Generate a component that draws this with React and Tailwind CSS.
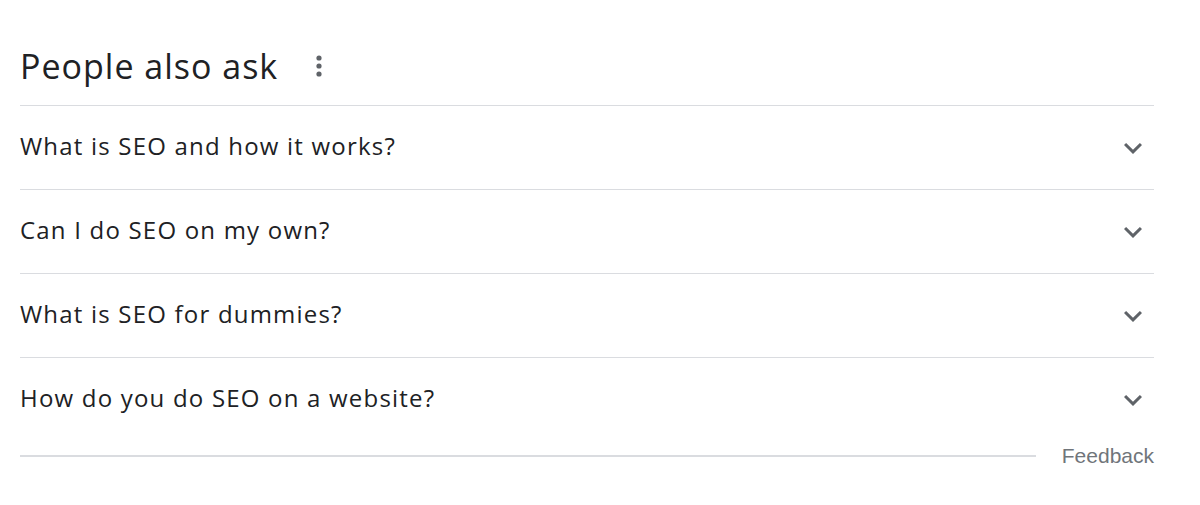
// People also ask block
const QUESTIONS = [
  'What is SEO and how it works?',
  'Can I do SEO on my own?',
  'What is SEO for dummies?',
  'How do you do SEO on a website?',
];

function MoreIcon() {
  return (
    <svg width="8" height="24" viewBox="0 0 8 24" className="text-[#5f6368]">
      <circle cx="4" cy="4" r="2.6" fill="currentColor" />
      <circle cx="4" cy="12" r="2.6" fill="currentColor" />
      <circle cx="4" cy="20" r="2.6" fill="currentColor" />
    </svg>
  );
}

function Chevron() {
  return (
    <svg width="36" height="36" viewBox="0 0 24 24" className="text-[#5f6368]">
      <path d="M16.59 8.59 12 13.17 7.41 8.59 6 10l6 6 6-6z" fill="currentColor" />
    </svg>
  );
}

export default function App() {
  return (
    <div className="w-[1200px] h-[505px] bg-white font-['Open_Sans',sans-serif] text-[#202124]">
      <div className="pl-5 pr-[46px] pt-[44px]">
        <div className="flex items-center h-[44px] mb-[17px]">
          <h2 className="text-[34px] leading-none tracking-[1px]">People also ask</h2>
          <div className="ml-[37px] flex items-center">
            <MoreIcon />
          </div>
        </div>

        <div className="border-t border-[#dadce0]">
          {QUESTIONS.map((q) => (
            <div
              key={q}
              className="flex items-center justify-between h-[84px] border-b border-[#dadce0] last:border-b-0"
            >
              <span className="text-[24px] leading-none tracking-[1.2px] mb-[4px]">{q}</span>
              <span className="mr-[3px] flex items-center">
                <Chevron />
              </span>
            </div>
          ))}
        </div>

        <div className="flex items-center mt-[3px]">
          <div className="flex-1 border-t-2 border-[#dadce0]" />
          <span className="ml-[26px] text-[21px] leading-none text-[#70757a] font-['Liberation_Sans',sans-serif]">Feedback</span>
        </div>
      </div>
    </div>
  );
}
